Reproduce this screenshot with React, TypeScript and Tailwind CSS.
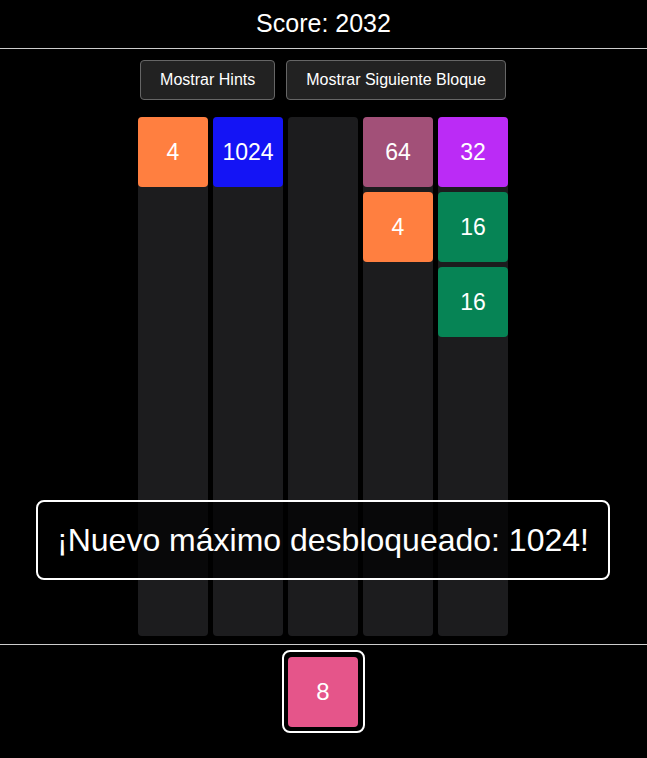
import React from 'react';

type Tile = { value: number; color: string };

const columns: Tile[][] = [
  [{ value: 4, color: 'bg-[#ff7f40]' }],
  [{ value: 1024, color: 'bg-[#1414f5]' }],
  [],
  [
    { value: 64, color: 'bg-[#a25078]' },
    { value: 4, color: 'bg-[#ff7f40]' },
  ],
  [
    { value: 32, color: 'bg-[#bb2bf6]' },
    { value: 16, color: 'bg-[#068455]' },
    { value: 16, color: 'bg-[#068455]' },
  ],
];

function Block({ tile }: { tile: Tile }) {
  return (
    <div className={`w-[70px] h-[70px] rounded-[4px] ${tile.color} flex items-center justify-center text-white text-[23px]`}>
      {tile.value}
    </div>
  );
}

export default function App() {
  return (
    <div className="relative min-h-[758px] bg-black text-white font-['Liberation_Sans',Arial,sans-serif]">
      {/* Header */}
      <div className="h-[49px] border-b border-[#cccccc] flex items-center justify-center">
        <span className="text-[25px]">Score: 2032</span>
      </div>

      {/* Controls */}
      <div className="flex justify-center gap-[11px] mt-[11px] pr-px">
        <button className="h-[40px] px-[19px] bg-[#222222] border border-[#666666] rounded-[4px] text-[16px] text-white">
          Mostrar Hints
        </button>
        <button className="h-[40px] px-[19px] bg-[#222222] border border-[#666666] rounded-[4px] text-[16px] text-white">
          Mostrar Siguiente Bloque
        </button>
      </div>

      {/* Board */}
      <div className="flex justify-center gap-[5px] mt-[17px] pr-px">
        {columns.map((col, i) => (
          <div key={i} className="w-[70px] h-[519px] bg-[#1c1c1e] rounded-[4px] flex flex-col gap-[5px]">
            {col.map((tile, j) => (
              <Block key={j} tile={tile} />
            ))}
          </div>
        ))}
      </div>

      {/* Next block */}
      <div className="mt-[8px] border-t border-[#cccccc] flex justify-center pt-[5px] pr-px">
        <div className="w-[83px] h-[83px] border-2 border-white rounded-[8px] flex items-center justify-center">
          <div className="w-[70px] h-[70px] rounded-[4px] bg-[#e5558a] flex items-center justify-center text-[24px]">
            8
          </div>
        </div>
      </div>

      {/* Toast */}
      <div className="absolute left-[36px] right-[37px] top-[500px] h-[80px] border-2 border-white rounded-[8px] bg-black/70 flex items-center justify-center">
        <span className="text-[32px]">¡Nuevo máximo desbloqueado: 1024!</span>
      </div>
    </div>
  );
}
